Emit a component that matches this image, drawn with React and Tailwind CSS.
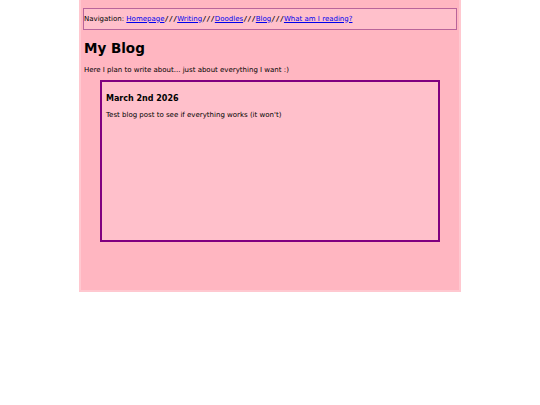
export default function App() {
  const font = { fontFamily: '"DejaVu Sans", Verdana, sans-serif' };
  const Sep = () => (
    <b style={{ fontFamily: '"DejaVu Sans Mono", "Liberation Mono", monospace' }}>///</b>
  );
  return (
    <div className="w-full bg-white" style={font}>
      <div className="mx-auto w-[382px] h-[292px] bg-[#ffb6c1] border-2 border-t-0 border-[#ffc8d0] px-[2px] pt-[8px] text-black">
        <div className="h-[22px] border border-[#b9649a] bg-[#ffc0cb] flex items-center px-0 text-[7px] leading-none">
          <span>Navigation:&nbsp;</span>
          <a href="#" className="text-[#0000ee] underline">Homepage</a>
          <Sep />
          <a href="#" className="text-[#0000ee] underline">Writing</a>
          <Sep />
          <a href="#" className="text-[#0000ee] underline">Doodles</a>
          <Sep />
          <a href="#" className="text-[#0000ee] underline">Blog</a>
          <Sep />
          <a href="#" className="text-[#0000ee] underline">What am I reading?</a>
        </div>
        <h1 className="pl-px mt-[12px] text-[13.5px] leading-none font-bold">My Blog</h1>
        <p className="pl-px mt-[11px] text-[7px] leading-none">Here I plan to write about... just about everything I want :)</p>
        <div className="mx-[17px] mt-[6px] h-[162px] border-2 border-[#800080] bg-[#ffc0cb] px-[4px] pt-[13px]">
          <h3 className="text-[8px] leading-none font-bold">March 2nd 2026</h3>
          <p className="mt-[9px] text-[7px] leading-none">Test blog post to see if everything works (it won't)</p>
        </div>
      </div>
    </div>
  );
}
